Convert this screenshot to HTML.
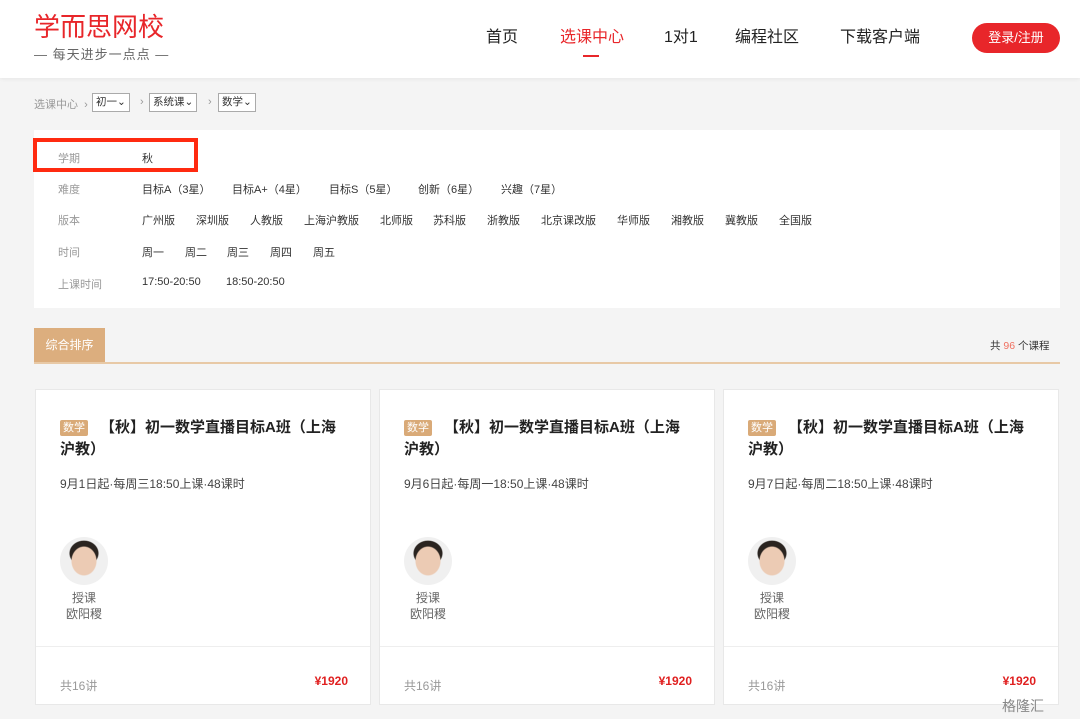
<!DOCTYPE html>
<html><head><meta charset="utf-8"><style>
*{margin:0;padding:0;box-sizing:border-box}
body{width:1080px;height:719px;overflow:hidden;background:#f4f4f4;font-family:"Liberation Sans","Noto Sans CJK SC",sans-serif;position:relative;color:#333}
.a{position:absolute;white-space:nowrap}
.hdr{position:absolute;left:0;top:0;width:1080px;height:78px;background:#fff;box-shadow:0 1px 4px rgba(0,0,0,.06)}
.nav{font-size:16px;color:#222;top:27px;line-height:22px}
.crumb{font-size:11px;color:#999;top:96px}
.box{border:1px solid #aaa;background:#fff;color:#333;padding:1px 3px;font-size:10.5px;height:19px;top:93px;line-height:15px}
.panel{position:absolute;left:34px;top:130px;width:1026px;height:178px;background:#fff}
.lbl{font-size:11px;color:#999;left:58px}
.v{font-size:11px;color:#333}
.card{position:absolute;top:389px;width:336px;height:316px;background:#fff;border:1px solid #e8e8e8}
.tag{position:absolute;left:24px;top:30px;background:#d9aa78;color:#fff;font-size:11px;padding:0 3px;line-height:16px;border-radius:2px}
.t{position:absolute;left:24px;top:27px;width:290px;font-size:15px;font-weight:bold;line-height:22px;color:#222;text-indent:40px}
.d{position:absolute;left:24px;top:85px;font-size:12px;color:#444}
.av{position:absolute;left:24px;top:147px;width:48px;height:48px;border-radius:50%;background:radial-gradient(ellipse 13px 15px at 50% 50%,#eccbb4 0 12px,transparent 13px),radial-gradient(ellipse 16px 14px at 50% 34%,#2a2420 0 14px,transparent 15px),#f0f0f0}
.tn{position:absolute;left:24px;top:200px;width:48px;text-align:center;font-size:12px;color:#666;line-height:16px}
.ln{position:absolute;left:0;top:256px;width:100%;height:1px;background:#eee}
.c16{position:absolute;left:24px;top:287px;font-size:12px;color:#999}
.pr{position:absolute;right:22px;top:284px;font-size:12px;color:#e02020;font-weight:bold}
</style></head><body>
<div class="hdr"></div>
<div class="a" style="left:34px;top:12px;font-size:26px;color:#e8262a;letter-spacing:0px;line-height:30px">学而思网校</div>
<div class="a" style="left:34px;top:44px;font-size:13px;color:#666;letter-spacing:1px">— 每天进步一点点 —</div>
<div class="a nav" style="left:486px">首页</div>
<div class="a nav" style="left:560px;color:#e8262a">选课中心</div>
<div class="a" style="left:583px;top:55px;width:16px;height:2px;background:#e8262a"></div>
<div class="a nav" style="left:664px">1对1</div>
<div class="a nav" style="left:735px">编程社区</div>
<div class="a nav" style="left:840px">下载客户端</div>
<div class="a" style="left:972px;top:23px;width:88px;height:30px;border-radius:15px;background:#e8262a;color:#fff;font-size:13px;text-align:center;line-height:30px">登录/注册</div>
<div class="a crumb" style="left:34px">选课中心 &nbsp;›</div>
<div class="a box" style="left:92px">初一⌄</div>
<div class="a crumb" style="left:140px">›</div>
<div class="a box" style="left:149px">系统课⌄</div>
<div class="a crumb" style="left:208px">›</div>
<div class="a box" style="left:218px">数学⌄</div>
<div class="panel"></div>
<div class="a" style="left:33px;top:138px;width:165px;height:34px;border:4px solid #ff2a10"></div>
<div class="a lbl" style="top:150px">学期</div><div class="a v" style="left:142px;top:150px">秋</div>
<div class="a lbl" style="top:181px">难度</div>
<div class="a v" style="left:142px;top:181px">目标A（3星）</div><div class="a v" style="left:232px;top:181px">目标A+（4星）</div><div class="a v" style="left:329px;top:181px">目标S（5星）</div><div class="a v" style="left:418px;top:181px">创新（6星）</div><div class="a v" style="left:501px;top:181px">兴趣（7星）</div>
<div class="a lbl" style="top:212px">版本</div>
<div class="a v" style="left:142px;top:212px">广州版</div><div class="a v" style="left:196px;top:212px">深圳版</div><div class="a v" style="left:250px;top:212px">人教版</div><div class="a v" style="left:304px;top:212px">上海沪教版</div><div class="a v" style="left:380px;top:212px">北师版</div><div class="a v" style="left:433px;top:212px">苏科版</div><div class="a v" style="left:487px;top:212px">浙教版</div><div class="a v" style="left:541px;top:212px">北京课改版</div><div class="a v" style="left:617px;top:212px">华师版</div><div class="a v" style="left:671px;top:212px">湘教版</div><div class="a v" style="left:725px;top:212px">冀教版</div><div class="a v" style="left:779px;top:212px">全国版</div>
<div class="a lbl" style="top:244px">时间</div>
<div class="a v" style="left:142px;top:244px">周一</div><div class="a v" style="left:185px;top:244px">周二</div><div class="a v" style="left:227px;top:244px">周三</div><div class="a v" style="left:270px;top:244px">周四</div><div class="a v" style="left:313px;top:244px">周五</div>
<div class="a lbl" style="top:276px">上课时间</div>
<div class="a v" style="left:142px;top:276px">17:50-20:50</div><div class="a v" style="left:226px;top:276px">18:50-20:50</div>
<div class="a" style="left:34px;top:328px;width:71px;height:34px;background:#dcae7e;color:#fff;font-size:12px;text-align:center;line-height:34px">综合排序</div>
<div class="a" style="left:34px;top:362px;width:1026px;height:2px;background:#e8c9a6"></div>
<div class="a" style="left:990px;top:338px;font-size:10.5px;color:#333">共 <span style="color:#f07060">96</span> 个课程</div>

<div class="card" style="left:35px"><div class="tag">数学</div><div class="t">【秋】初一数学直播目标A班（上海沪教）</div><div class="d">9月1日起·每周三18:50上课·48课时</div><div class="av"></div><div class="tn">授课<br>欧阳稷</div><div class="ln"></div><div class="c16">共16讲</div><div class="pr">¥1920</div></div>
<div class="card" style="left:379px"><div class="tag">数学</div><div class="t">【秋】初一数学直播目标A班（上海沪教）</div><div class="d">9月6日起·每周一18:50上课·48课时</div><div class="av"></div><div class="tn">授课<br>欧阳稷</div><div class="ln"></div><div class="c16">共16讲</div><div class="pr">¥1920</div></div>
<div class="card" style="left:723px"><div class="tag">数学</div><div class="t">【秋】初一数学直播目标A班（上海沪教）</div><div class="d">9月7日起·每周二18:50上课·48课时</div><div class="av"></div><div class="tn">授课<br>欧阳稷</div><div class="ln"></div><div class="c16">共16讲</div><div class="pr">¥1920</div></div>
<div class="a" style="left:1002px;top:696px;font-size:14px;color:#888">格隆汇</div>
</body></html>
